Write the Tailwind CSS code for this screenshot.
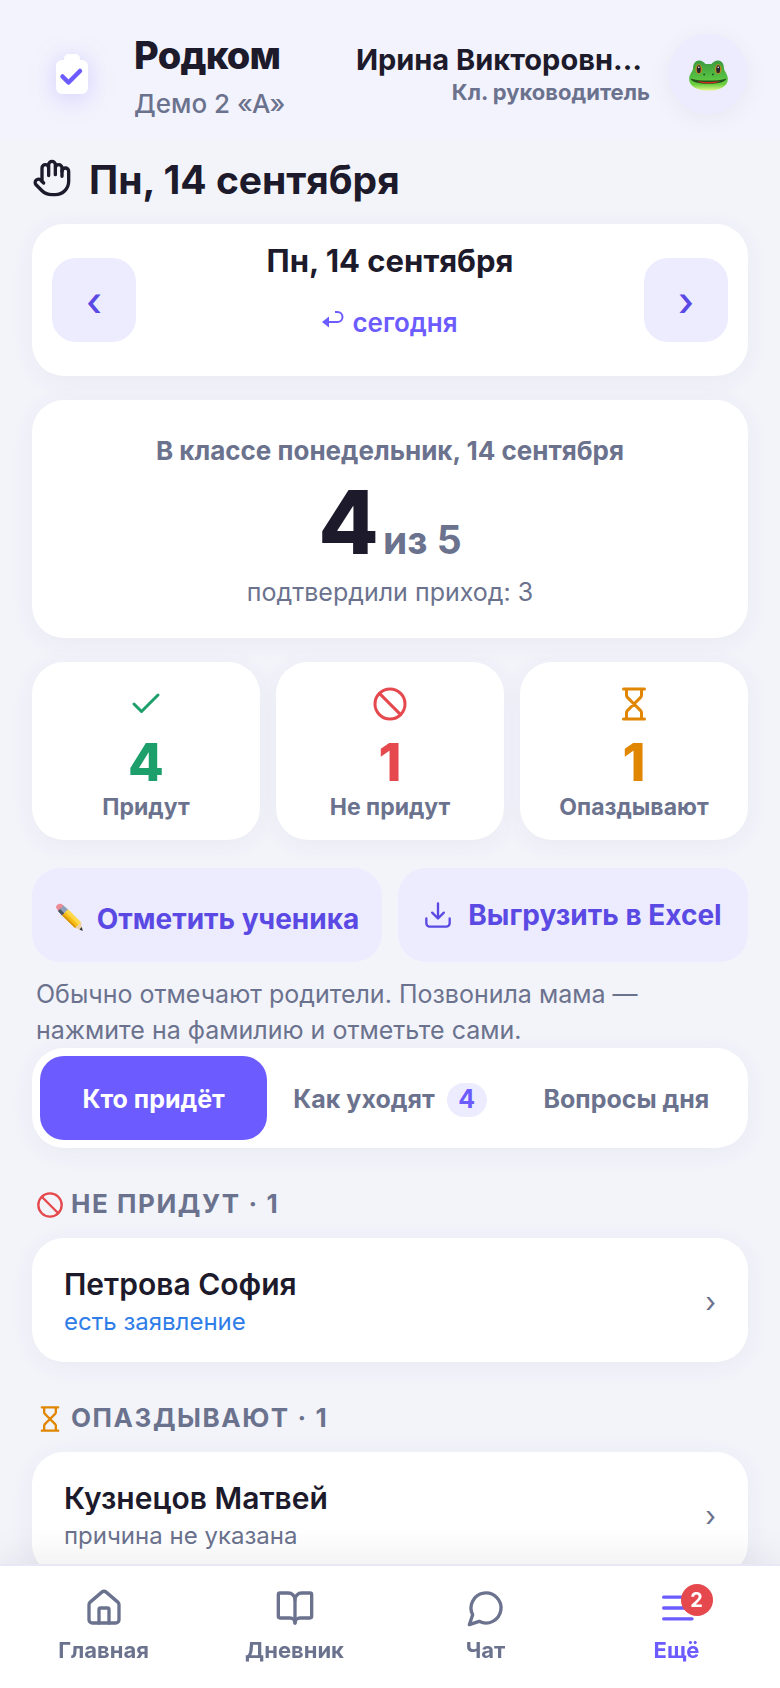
<!DOCTYPE html>
<html lang="ru">
<head>
    <meta charset="UTF-8">
    <meta name="viewport" content="width=device-width, initial-scale=1.0">
    <title>Родком</title>
    <script src="https://cdn.jsdelivr.net/npm/@tailwindcss/browser@4"></script>
</head>
<body class="min-h-screen bg-[#f3f4fa] pb-32 font-['Inter','Noto_Sans',sans-serif] text-[#1c1a2b] [font-optical-sizing:none]">
    <!-- Icons -->
    <svg class="hidden" xmlns="http://www.w3.org/2000/svg">
        <symbol id="ban" viewBox="0 0 24 24" fill="none" stroke="currentColor" stroke-width="2" stroke-linecap="round"><circle cx="12" cy="12" r="10"/><path d="M4.93 4.93l14.14 14.14"/></symbol>
        <symbol id="hourglass" viewBox="0 0 24 24" fill="none" stroke="currentColor" stroke-width="2" stroke-linecap="round" stroke-linejoin="round"><path d="M5 22h14M5 2h14M17 22v-4.17a2 2 0 0 0-.59-1.42L12 12l-4.41 4.41A2 2 0 0 0 7 17.83V22M7 2v4.17a2 2 0 0 0 .59 1.42L12 12l4.41-4.41A2 2 0 0 0 17 6.17V2"/></symbol>
    </svg>

    <!-- Header -->
    <header class="flex h-[139px] items-center bg-[#f3f3fd] px-8 pb-2 pt-4">
        <div class="flex h-20 w-20 shrink-0 items-center justify-center">
            <svg class="h-10 w-8 drop-shadow-[0_4px_12px_rgba(108,92,255,0.25)]" viewBox="0 0 32 40" fill="none">
                <path d="M8 6V4.500a4.500 4.500 0 0 1 4.500-4.500h7a4.500 4.500 0 0 1 4.500 4.500V6h2a6 6 0 0 1 6 6v22a6 6 0 0 1-6 6H6a6 6 0 0 1-6-6V12a6 6 0 0 1 6-6z" fill="#fff"/>
                <path d="M6.500 22.500l6 6L24 17" stroke="#6c5cff" stroke-width="4.500" stroke-linecap="round" stroke-linejoin="round"/>
            </svg>
        </div>
        <div class="ml-[22px] flex-1 pt-1">
            <p class="text-[38px] font-extrabold leading-[46px] tracking-[-0.02em]">Родком</p>
            <p class="mt-[10px] text-[26px] font-medium leading-8 text-[#6b728e]">Демо 2 «А»</p>
        </div>
        <div class="mr-[18px] pt-1 text-right">
            <p class="pr-2 text-[29px] font-bold leading-8">Ирина Викторовн…</p>
            <p class="text-[22px] font-bold leading-8 text-[#6b728e]">Кл. руководитель</p>
        </div>
        <button aria-label="Профиль" class="flex h-20 w-20 shrink-0 items-center justify-center rounded-full bg-[#edecff] pt-1 shadow-[0_4px_24px_rgba(28,26,43,0.05)]">
            <svg class="h-[31px] w-[39px]" viewBox="0 0 40 32">
                <defs>
                    <linearGradient id="frog" x1="0" y1="0" x2="0" y2="1"><stop offset="0" stop-color="#3c9a3e"/><stop offset=".55" stop-color="#55bf43"/><stop offset=".8" stop-color="#6ccf3f"/><stop offset="1" stop-color="#e3f58e"/></linearGradient>
                </defs>
                <path d="M10 0.500c3.500 0 5.500 2 7 3.500h6c1.500-1.500 3.500-3.500 7-3.500 4 0 6 4 6 8 0 3 4 6 4 11 0 8-9 12-20 12S0 27.500 0 19.500c0-5 4-8 4-11 0-4 2-8 6-8z" fill="url(#frog)"/>
                <ellipse cx="10" cy="9.500" rx="3.500" ry="5" fill="#b98d22"/><ellipse cx="30" cy="9.500" rx="3.500" ry="5" fill="#b98d22"/>
                <ellipse cx="10" cy="9.500" rx="2" ry="4" fill="#2a2430"/><ellipse cx="30" cy="9.500" rx="2" ry="4" fill="#2a2430"/>
                <circle cx="10" cy="7.500" r=".8" fill="#fff"/><circle cx="30" cy="7.500" r=".8" fill="#fff"/>
                <circle cx="15.500" cy="15" r="1" fill="#1d5c22"/><circle cx="24.500" cy="15" r="1" fill="#1d5c22"/>
                <path d="M1.500 19c9 3 28 3 37 0-1 3.500-8 5.500-18.500 5.500S2.500 22.500 1.500 19z" fill="#20521b"/>
                <path d="M8 22c7 1 17 1 24 0-3 1.700-7 2.200-12 2.200S11 23.700 8 22z" fill="#d22a22"/>
            </svg>
        </button>
    </header>

    <main class="px-8">
        <h1 class="flex h-[85px] items-center gap-[17px] pb-1 text-[39px] font-bold leading-[48px]">
            <svg class="mb-1 h-10 w-10" viewBox="0 0 24 24" fill="none" stroke="currentColor" stroke-width="2" stroke-linecap="round" stroke-linejoin="round"><path d="M18 11V6a2 2 0 0 0-2-2 2 2 0 0 0-2 2M14 10V4a2 2 0 0 0-2-2 2 2 0 0 0-2 2v2M10 10.500V6a2 2 0 0 0-2-2 2 2 0 0 0-2 2v8"/><path d="M18 8a2 2 0 1 1 4 0v6a8 8 0 0 1-8 8h-2c-2.800 0-4.500-.860-5.990-2.340l-3.600-3.600a2 2 0 0 1 2.830-2.820L7 15"/></svg>
            Пн, 14 сентября
        </h1>

        <!-- Day switcher -->
        <section class="flex items-center justify-between rounded-[32px] bg-white px-5 py-4 shadow-[0_4px_24px_rgba(60,50,140,0.06)]">
            <button aria-label="Предыдущий день" class="h-[84px] w-[84px] rounded-3xl bg-[#edecff] pt-1 text-[40px] font-medium text-[#5a4ae3]">‹</button>
            <div class="flex flex-col items-center">
                <p class="text-[31px] font-bold leading-[42px]">Пн, 14 сентября</p>
                <a href="#" class="flex h-[78px] items-center gap-2 pt-[2px] text-[26px] font-semibold text-[#6c5cff]">
                    <svg class="mb-1 h-5 w-[22px]" viewBox="0 0 22 20" fill="none"><path d="M6 12h9.500a5 5 0 0 0 0-10H13" stroke="currentColor" stroke-width="2"/><path d="M0 12l7-5.500v11z" fill="currentColor"/></svg>
                    сегодня
                </a>
            </div>
            <button aria-label="Следующий день" class="h-[84px] w-[84px] rounded-3xl bg-[#edecff] pt-1 text-[40px] font-medium text-[#5a4ae3]">›</button>
        </section>

        <!-- Summary -->
        <section class="mt-6 rounded-[32px] bg-white pb-7 pt-8 text-center shadow-[0_4px_24px_rgba(60,50,140,0.06)]">
            <p class="text-[26px] font-bold leading-[38px] text-[#6b728e]">В классе понедельник, 14 сентября</p>
            <p class="mt-1 flex items-baseline justify-center gap-1 text-[88px] font-extrabold leading-[96px]">4<span class="text-[39px] font-bold leading-none text-[#6b728e]">из 5</span></p>
            <p class="mt-1 text-[25px] leading-9 text-[#6b728e]">подтвердили приход: 3</p>
        </section>

        <!-- Counters -->
        <section class="mt-6 grid grid-cols-3 gap-4 text-center">
            <div class="flex flex-col items-center rounded-[32px] bg-white pb-[18px] pt-6 shadow-[0_4px_24px_rgba(60,50,140,0.06)]">
                <svg class="h-9 w-9 text-[#1c9f6b]" viewBox="0 0 24 24" fill="none" stroke="currentColor" stroke-width="2" stroke-linecap="round" stroke-linejoin="round"><path d="M20 6L9 17l-5-5"/></svg>
                <p class="mt-3 text-[52px] font-extrabold leading-[58px] text-[#1c9f6b]">4</p>
                <p class="text-[23px] font-bold leading-[30px] text-[#6b728e]">Придут</p>
            </div>
            <div class="flex flex-col items-center rounded-[32px] bg-white pb-[18px] pt-6 shadow-[0_4px_24px_rgba(60,50,140,0.06)]">
                <svg class="h-9 w-9 text-[#e5484d]"><use href="#ban"/></svg>
                <p class="mt-3 text-[52px] font-extrabold leading-[58px] text-[#e5484d]">1</p>
                <p class="text-[23px] font-bold leading-[30px] text-[#6b728e]">Не придут</p>
            </div>
            <div class="flex flex-col items-center rounded-[32px] bg-white pb-[18px] pt-6 shadow-[0_4px_24px_rgba(60,50,140,0.06)]">
                <svg class="h-9 w-9 text-[#e08600]"><use href="#hourglass"/></svg>
                <p class="mt-3 text-[52px] font-extrabold leading-[58px] text-[#e08600]">1</p>
                <p class="text-[23px] font-bold leading-[30px] text-[#6b728e]">Опаздывают</p>
            </div>
        </section>

        <!-- Actions -->
        <div class="mt-7 grid grid-cols-2 gap-4">
            <button class="flex h-[94px] items-center justify-center gap-[14px] whitespace-nowrap rounded-[28px] bg-[#edecff] pt-2 text-[28px] font-bold text-[#5a4ae3]">
                <svg class="mb-1 h-7 w-7" viewBox="0 0 28 28">
                    <path d="M1 4.500C1 2 4 0 6.500 1L9 3 3.500 8.500z" fill="#ec8b95"/>
                    <path d="M3 8L8.500 2.500 13 6.500 7 12.500z" fill="#8da0b8"/><path d="M3 8l2-2 4.500 4.500-2.500 2z" fill="#4b5563"/>
                    <path d="M7 12.500l6-6L26 19.500 20 25z" fill="#f9bd12"/><path d="M10.500 9l2.500-2.500L26 19.500 23.500 22z" fill="#ffd84a"/><path d="M7 12.500l1.500-1.500L21.500 24 20 25z" fill="#d9960a"/>
                    <path d="M20 25l6-5.500 1.500 8z" fill="#ecd0a4"/><path d="M24.500 26.500l2.300-2.500.9 4z" fill="#2b2b33"/>
                </svg>
                Отметить ученика
            </button>
            <button class="flex h-[94px] items-center justify-center gap-4 whitespace-nowrap rounded-[28px] bg-[#edecff] text-[28px] font-bold text-[#5a4ae3]">
                <svg class="h-7 w-7" viewBox="0 0 24 24" fill="none" stroke="currentColor" stroke-width="2" stroke-linecap="round" stroke-linejoin="round"><path d="M12 2v13M7 10l5 5 5-5M2 15v4a3 3 0 0 0 3 3h14a3 3 0 0 0 3-3v-4"/></svg>
                Выгрузить в Excel
            </button>
        </div>
        <p class="mt-[14px] px-1 text-[25px] leading-9 text-[#6b728e]">Обычно отмечают родители. Позвонила мама —<br>нажмите на фамилию и отметьте сами.</p>

        <!-- Tabs -->
        <div role="tablist" class="grid grid-cols-[1fr_auto_1fr] rounded-[32px] bg-white p-2 text-[25px] font-bold text-[#6b728e] shadow-[0_4px_24px_rgba(60,50,140,0.06)]">
            <button role="tab" aria-selected="true" class="h-[84px] rounded-3xl bg-[#6c5cff] pt-[3px] text-white">Кто придёт</button>
            <button role="tab" class="flex h-[84px] items-center justify-center gap-3 whitespace-nowrap px-[26px] pt-[3px]">Как уходят <span class="flex h-[34px] w-10 items-center justify-center rounded-full bg-[#edecff] text-[#6c5cff]">4</span></button>
            <button role="tab" class="h-[84px] whitespace-nowrap pt-[3px]">Вопросы дня</button>
        </div>

        <!-- Absent -->
        <h2 class="mt-9 flex h-[54px] items-center gap-[7px] px-1 pb-4 text-[26px] font-bold uppercase tracking-[0.06em] text-[#6b728e]">
            <svg class="mt-1 h-7 w-7 text-[#e5484d]"><use href="#ban"/></svg>
            Не придут · 1
        </h2>
        <a href="#" class="flex h-[124px] items-center rounded-[32px] bg-white px-8 pt-1 shadow-[0_4px_24px_rgba(60,50,140,0.06)]">
            <span class="flex-1">
                <span class="block text-[30px] font-semibold leading-10">Петрова София</span>
                <span class="block text-2xl leading-9 text-[#2f7de8]">есть заявление</span>
            </span>
            <span class="text-[28px] text-[#6b728e]">›</span>
        </a>

        <!-- Late -->
        <h2 class="mt-9 flex h-[54px] items-center gap-[7px] px-1 pb-4 text-[26px] font-bold uppercase tracking-[0.06em] text-[#6b728e]">
            <svg class="mt-1 h-7 w-7 text-[#e08600]"><use href="#hourglass"/></svg>
            Опаздывают · 1
        </h2>
        <a href="#" class="flex h-[124px] items-center rounded-[32px] bg-white px-8 pt-1 shadow-[0_4px_24px_rgba(60,50,140,0.06)]">
            <span class="flex-1">
                <span class="block text-[30px] font-semibold leading-10">Кузнецов Матвей</span>
                <span class="block text-2xl leading-9 text-[#6b728e]">причина не указана</span>
            </span>
            <span class="text-[28px] text-[#6b728e]">›</span>
        </a>
    </main>

    <!-- Bottom navigation -->
    <nav class="fixed inset-x-0 bottom-0 grid h-[124px] grid-cols-4 border-t-2 border-[#e8e7f5] bg-white px-2 text-[22px] font-bold text-[#6b728e] shadow-[0_-6px_36px_rgba(28,26,43,0.08)]">
        <a href="#" class="flex flex-col items-center pt-[22px]">
            <svg class="h-10 w-10" viewBox="0 0 24 24" fill="none" stroke="currentColor" stroke-width="2" stroke-linecap="round" stroke-linejoin="round"><path d="M15 21v-8a1 1 0 0 0-1-1h-4a1 1 0 0 0-1 1v8"/><path d="M3 10a2 2 0 0 1 .709-1.528l7-5.999a2 2 0 0 1 2.582 0l7 5.999A2 2 0 0 1 21 10v9a2 2 0 0 1-2 2H5a2 2 0 0 1-2-2z"/></svg>
            <span class="mt-[6px] leading-8">Главная</span>
        </a>
        <a href="#" class="flex flex-col items-center pt-[22px]">
            <svg class="h-10 w-10" viewBox="0 0 24 24" fill="none" stroke="currentColor" stroke-width="2" stroke-linecap="round" stroke-linejoin="round"><path d="M12 7v14"/><path d="M3 18a1 1 0 0 1-1-1V4a1 1 0 0 1 1-1h5a4 4 0 0 1 4 4 4 4 0 0 1 4-4h5a1 1 0 0 1 1 1v13a1 1 0 0 1-1 1h-6a3 3 0 0 0-3 3 3 3 0 0 0-3-3z"/></svg>
            <span class="mt-[6px] leading-8">Дневник</span>
        </a>
        <a href="#" class="flex flex-col items-center pt-[22px]">
            <svg class="h-10 w-10" viewBox="0 0 24 24" fill="none" stroke="currentColor" stroke-width="2" stroke-linecap="round" stroke-linejoin="round"><path d="M7.900 20A9 9 0 1 0 4 16.100L2 22z"/></svg>
            <span class="mt-[6px] leading-8">Чат</span>
        </a>
        <a href="#" class="flex flex-col items-center pt-[22px] text-[#6c5cff]">
            <span class="relative">
                <svg class="h-10 w-10" viewBox="0 0 24 24" fill="none" stroke="currentColor" stroke-width="2" stroke-linecap="round"><path d="M4 5.500h17M4 12h17M4 18.500h17"/></svg>
                <span class="absolute -right-4 -top-1 flex h-8 w-8 items-center justify-center rounded-full bg-[#e5484d] text-xl font-bold text-white">2</span>
            </span>
            <span class="mt-[6px] leading-8">Ещё</span>
        </a>
    </nav>
</body>
</html>
